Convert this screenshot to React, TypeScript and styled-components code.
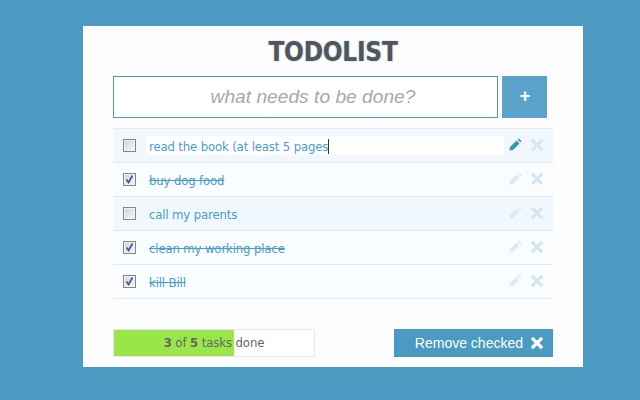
import React from "react";
import styled, { createGlobalStyle } from "styled-components";

const Global = createGlobalStyle`
  html, body { margin: 0; padding: 0; height: 400px; overflow: hidden; background: #4a9ac2; }
  * { box-sizing: border-box; }
`;

const Page = styled.div`
  width: 640px;
  height: 400px;
  padding-top: 26px;
  padding-left: 83px;
  background: #4a9ac2;
`;

const Card = styled.main`
  width: 500px;
  height: 341px;
  background: #fdfdfd;
  padding: 8px 30px 0;
  display: flex;
  flex-direction: column;
`;

const Title = styled.h1`
  margin: 0;
  height: 42px;
  text-align: center;
  font: bold 26px/36px "DejaVu Sans", sans-serif;
  font-stretch: condensed;
  letter-spacing: -0.3px;
  color: #555;
  text-shadow: 0 0 2px #8cc6ea;
`;

const AddRow = styled.form`
  display: flex;
  gap: 4px;
  height: 42px;
  margin: 0;
`;

const NewInput = styled.input`
  width: 385px;
  height: 42px;
  border: 1px solid #4a9ac2;
  background: #fff;
  outline: none;
  padding: 0 0 0 15px;
  text-align: center;
  font: italic 19.2px "Liberation Sans", sans-serif;
  &::placeholder { color: #a8a8a8; opacity: 1; }
`;

const AddButton = styled.button`
  width: 45px;
  height: 42px;
  border: 0;
  padding: 0 0 2px 1px;
  background: #5ba3ca;
  color: #fff;
  font: bold 18px "Liberation Sans", sans-serif;
`;

const List = styled.ul`
  list-style: none;
  margin: 10px 0 0;
  padding: 0;
  width: 440px;
  border-top: 1px solid #e8e8e8;
`;

const Row = styled.li<{ $shade: boolean }>`
  height: 34px;
  display: flex;
  align-items: center;
  padding-left: 10px;
  background: ${(p) => (p.$shade ? "#f0f8fe" : "#fafdff")};
  border-bottom: 1px solid #e6e8ea;
`;

const Check = styled.span`
  width: 13px;
  height: 13px;
  flex: none;
  border: 1px solid #858585;
  box-shadow: inset 0 0 0 1px #f2f2f2;
  background: linear-gradient(135deg, #d2d2d2, #f8f8f8);
  display: flex;
  align-items: center;
  justify-content: center;
`;

const Label = styled.div<{ $done?: boolean; $editing?: boolean }>`
  margin-left: 10px;
  width: 358px;
  height: 19px;
  padding-left: 3px;
  background: ${(p) => (p.$editing ? "#fff" : "transparent")};
  color: #4a9cca;
  font: 13px/21px "DejaVu Sans", sans-serif;
  font-stretch: condensed;
  letter-spacing: -0.14px;
  white-space: nowrap;
  text-decoration: ${(p) => (p.$done ? "line-through" : "none")};
`;

const Caret = styled.span`
  display: inline-block;
  width: 1px;
  height: 15px;
  background: #333;
  vertical-align: -3px;
`;

const Actions = styled.div`
  margin-left: 5px;
  display: flex;
  align-items: center;
  gap: 9px;
  margin-top: -2px;
`;

const Footer = styled.footer`
  margin-top: 30px;
  width: 440px;
  display: flex;
  justify-content: space-between;
`;

const Progress = styled.div`
  position: relative;
  width: 202px;
  height: 28px;
  border: 1px solid #e8e8e8;
  background: #fff;
  text-align: center;
  font: 13px/26px "DejaVu Sans", sans-serif;
  font-stretch: condensed;
  letter-spacing: -0.1px;
  color: #666;
`;

const Fill = styled.div`
  position: absolute;
  left: 0;
  top: 0;
  bottom: 0;
  background: #9ae64a;
`;

const ProgressText = styled.span`
  position: relative;
  b { font-weight: bold; }
`;

const RemoveButton = styled.button`
  width: 159px;
  height: 28px;
  border: 0;
  padding: 0 10px 0 0;
  background: #4a9ac2;
  color: #fff;
  font: 14px "Liberation Sans", sans-serif;
  display: flex;
  align-items: center;
  justify-content: flex-end;
  gap: 8px;
`;

const Tick = () => (
  <svg width="11" height="11" viewBox="0 0 11 11">
    <path d="M2.5 5.5 L4.6 8.5 L8.5 1.5" fill="none" stroke="#3f57a0" strokeWidth="1.7" />
  </svg>
);

const Pencil = ({ color }: { color: string }) => (
  <svg width="13" height="13" viewBox="0 0 13 13">
    <path d="M0.5 12.5 L1 9 L7.5 2.5 L10.5 5.5 L4 12 Z M8.5 1.5 L9.8 0.5 L12.5 3 L11.5 4.5 Z" fill={color} />
  </svg>
);

const Cross = ({ color, size = 12 }: { color: string; size?: number }) => (
  <svg width={size} height={size} viewBox="0 0 12 12">
    <path d="M2 2 L10 10 M10 2 L2 10" stroke={color} strokeWidth="3.2" strokeLinecap="square" />
  </svg>
);

const items = [
  { text: "read the book (at least 5 pages", done: false, editing: true },
  { text: "buy dog food", done: true },
  { text: "call my parents", done: false },
  { text: "clean my working place", done: true },
  { text: "kill Bill", done: true },
];

export default function App() {
  return (
    <Page>
      <Global />
      <Card>
        <Title>TODOLIST</Title>
        <AddRow onSubmit={(e) => e.preventDefault()}>
          <NewInput placeholder="what needs to be done?" />
          <AddButton type="button">+</AddButton>
        </AddRow>
        <List>
          {items.map((it) => (
            <Row key={it.text} $shade={!it.done}>
              <Check>{it.done && <Tick />}</Check>
              <Label $done={it.done} $editing={it.editing}>
                {it.text}
                {it.editing && <Caret />}
              </Label>
              <Actions>
                <Pencil color={it.editing ? "#3f8fbb" : "#d9ebf5"} />
                <Cross color="#d3e7f2" />
              </Actions>
            </Row>
          ))}
        </List>
        <Footer>
          <Progress>
            <Fill style={{ width: `${(3 / 5) * 100}%` }} />
            <ProgressText>
              <b>3</b> of <b>5</b> tasks done
            </ProgressText>
          </Progress>
          <RemoveButton type="button">
            Remove checked
            <Cross color="#fff" />
          </RemoveButton>
        </Footer>
      </Card>
    </Page>
  );
}
